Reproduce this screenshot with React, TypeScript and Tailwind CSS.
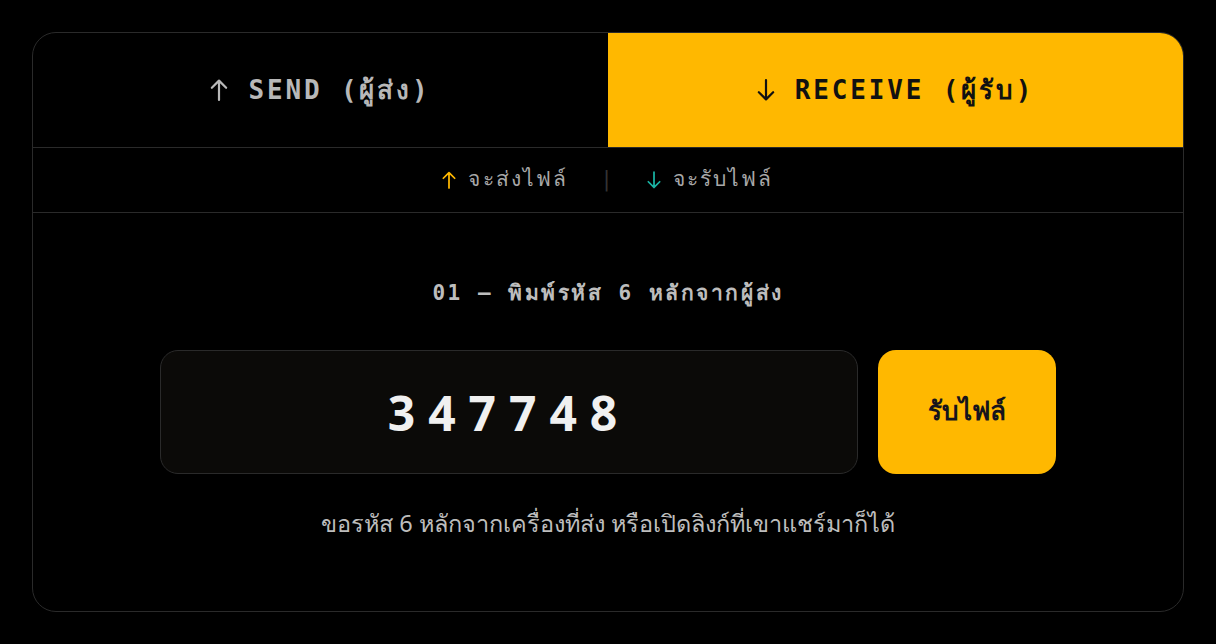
import React, { useState } from 'react';

const mono = { fontFamily: '"DejaVu Sans Mono", monospace' };
const sans = { fontFamily: '"Noto Sans", sans-serif' };

function Arrow({ dir, className }: { dir: 'up' | 'down'; className?: string }) {
  return (
    <svg
      viewBox="0 0 16 20"
      className={className}
      fill="none"
      stroke="currentColor"
      strokeWidth={2}
      strokeLinecap="round"
      strokeLinejoin="round"
      style={dir === 'down' ? { transform: 'rotate(180deg)' } : undefined}
    >
      <path d="M8 19V1.5M1.5 8L8 1.5L14.5 8" />
    </svg>
  );
}

export default function App() {
  const [mode, setMode] = useState<'send' | 'receive'>('receive');
  const [code, setCode] = useState('347748');

  const tabClass = (active: boolean) =>
    `flex items-center justify-center gap-5 text-[26px] font-bold tracking-[0.11em] ${
      active ? 'bg-[#ffb800] text-[#111]' : 'text-[#b8b8b8]'
    }`;

  return (
    <div className="min-h-screen bg-black p-8">
      <div className="flex flex-col h-[580px] rounded-[24px] border border-[#2a2a2a] overflow-hidden bg-black">
        {/* Tabs */}
        <div className="grid grid-cols-2 h-[115px] border-b border-[#2a2a2a]">
          <button onClick={() => setMode('send')} className={tabClass(mode === 'send')} style={mono}>
            <Arrow dir="up" className="w-[18px] h-[22px]" />
            <span>SEND (ผู้ส่ง)</span>
          </button>
          <button onClick={() => setMode('receive')} className={tabClass(mode === 'receive')} style={mono}>
            <Arrow dir="down" className="w-[18px] h-[22px]" />
            <span>RECEIVE (ผู้รับ)</span>
          </button>
        </div>

        {/* Legend */}
        <div
          className="flex items-center justify-center h-[65px] border-b border-[#2a2a2a] text-[21px] text-[#a8a8a8] tracking-[0.1em]"
          style={mono}
        >
          <span className="flex items-center gap-3">
            <Arrow dir="up" className="w-[14px] h-[18px] text-[#ffb800]" />
            จะส่งไฟล์
          </span>
          <span className="mx-8 text-[#333]">|</span>
          <span className="flex items-center gap-3">
            <Arrow dir="down" className="w-[14px] h-[18px] text-[#19b3a3]" />
            จะรับไฟล์
          </span>
        </div>

        {/* Body */}
        <div className="flex-1 flex flex-col items-center pt-[66px]">
          <p className="text-[21px] leading-[28px] font-bold tracking-[0.12em] text-[#bdbdbd]" style={mono}>
            01 — พิมพ์รหัส 6 หลักจากผู้ส่ง
          </p>

          <div className="flex gap-5 mt-[43px]">
            <input
              value={code}
              onChange={(e) => setCode(e.target.value.replace(/\D/g, '').slice(0, 6))}
              className="w-[698px] h-[124px] rounded-[18px] border border-[#2a2a2a] bg-[#0b0a08] text-center text-[48px] font-bold tracking-[0.27em] text-[#f0f0f0] outline-none"
              style={sans}
            />
            <button
              className="w-[178px] h-[124px] rounded-[18px] bg-[#ffb800] pb-1 text-[26px] font-extrabold text-[#15141c]"
              style={sans}
            >
              รับไฟล์
            </button>
          </div>

          <p className="mt-[33px] text-[23.5px] leading-[32px] text-[#bdbdbd]" style={sans}>
            ขอรหัส 6 หลักจากเครื่องที่ส่ง หรือเปิดลิงก์ที่เขาแชร์มาก็ได้
          </p>
        </div>
      </div>
    </div>
  );
}
